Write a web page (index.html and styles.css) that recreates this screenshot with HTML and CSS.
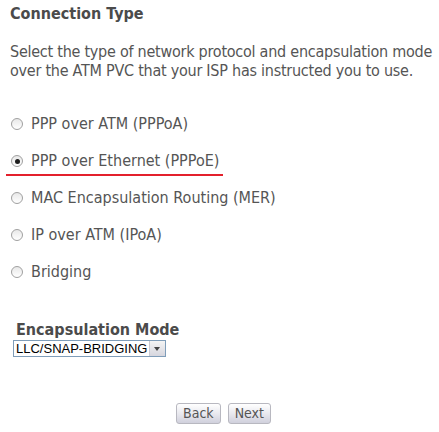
FILE: index.html
```html
<!DOCTYPE html>
<html>
<head>
    <meta charset="utf-8">
    <meta name="viewport" content="width=device-width, initial-scale=1">
    <title>Connection Type</title>
    <link rel="stylesheet" href="styles.css">
</head>

<body>
    <div class="page">
        <h2 class="title">Connection Type</h2>
        <p class="intro">Select the type of network protocol and encapsulation mode over the ATM PVC that your ISP has instructed you to use.</p>

        <ul class="options">
            <li><label class="opt"><input type="radio" name="ntwkPrtcl"> PPP over ATM (PPPoA)</label></li>
            <li><label class="opt marked"><input type="radio" name="ntwkPrtcl" checked> PPP over Ethernet (PPPoE)</label></li>
            <li><label class="opt"><input type="radio" name="ntwkPrtcl"> MAC Encapsulation Routing (MER)</label></li>
            <li><label class="opt"><input type="radio" name="ntwkPrtcl"> IP over ATM (IPoA)</label></li>
            <li><label class="opt"><input type="radio" name="ntwkPrtcl"> Bridging</label></li>
        </ul>

        <div class="encap">
            <h3 class="encap-title">Encapsulation Mode</h3>
            <div class="select">
                <span class="select-text">LLC/SNAP-BRIDGING</span>
                <span class="select-arrow"></span>
            </div>
        </div>

        <div class="actions">
            <button class="btn">Back</button>
            <button class="btn marked-btn">Next</button>
        </div>
    </div>
</body>
</html>
```

FILE: styles.css
```css
body{
    margin: 0;
    padding: 0;
    background-color: #fff;
    color: #555;
    font-family: "DejaVu Sans Condensed", "DejaVu Sans", sans-serif;
    font-size: 16px;}

.page{
    padding: 4px 0 0 10px;}

.title{
    margin: 0;
    font-size: 16px;
    line-height: 20px;
    font-weight: bold;
    color: #4b4b4b;}

.intro{
    margin: 18px 0 0 0;
    line-height: 19px;
    width: 429px;
    letter-spacing: -0.25px;}

.options{
    list-style: none;
    margin: 34px 0 0 0;
    padding: 0;}

.options li{
    height: 37px;}

.opt{
    display: inline-flex;
    align-items: center;
    gap: 8px;
    line-height: 20px;}

.opt input{
    appearance: none;
    -webkit-appearance: none;
    box-sizing: border-box;
    margin: 0 0 0 1px;
    width: 12px;
    height: 12px;
    border: 1px solid #a0a0a0;
    border-radius: 50%;
    background: linear-gradient(#e8e8e8, #fff);
    position: relative;}

.opt input:checked::after{
    content: "";
    position: absolute;
    left: 2.5px;
    top: 2.5px;
    width: 5px;
    height: 5px;
    border-radius: 50%;
    background-color: #1e1e1e;}

.marked{
    border-bottom: 2px solid #e3202c;
    margin-left: -4px;
    padding: 0 4px 3px 4px;}

.encap{
    margin: 23px 0 0 3px;}

.encap-title{
    margin: 0 0 0 3px;
    font-size: 16px;
    line-height: 16px;
    font-weight: bold;
    color: #4b4b4b;}

.select{
    display: inline-flex;
    align-items: stretch;
    height: 15px;
    border: 1px solid #7f9db9;
    background-color: #fff;}

.select-text{
    font-family: "Liberation Sans", Arial, sans-serif;
    font-size: 13px;
    line-height: 15px;
    color: #000;
    padding: 0 2px 0 2px;}

.select-arrow{
    width: 15px;
    background: linear-gradient(#f4f4f4, #d6d6de);
    border-left: 1px solid #c9c9d1;
    position: relative;}

.select-arrow::after{
    content: "";
    position: absolute;
    left: 4px;
    top: 6px;
    border-left: 3px solid transparent;
    border-right: 3px solid transparent;
    border-top: 4px solid #444;}

.actions{
    display: flex;
    justify-content: center;
    gap: 7px;
    margin: 46px 0 0 -2px;}

.btn{
    height: 21px;
    padding: 0 6px;
    border: 1px solid #b8b8c0;
    border-radius: 3px;
    background: linear-gradient(#ffffff, #e9e9ef 50%, #d0d0dc);
    color: #555;
    font-family: "DejaVu Sans Condensed", "DejaVu Sans", sans-serif;
    font-size: 14px;
    line-height: 19px;}

.marked-btn{
    position: relative;}

.marked-btn::after{
    content: "";
    position: absolute;
    left: -5px;
    right: -3px;
    bottom: -3px;
    height: 2px;
    background-color: #e3202c;}
```
